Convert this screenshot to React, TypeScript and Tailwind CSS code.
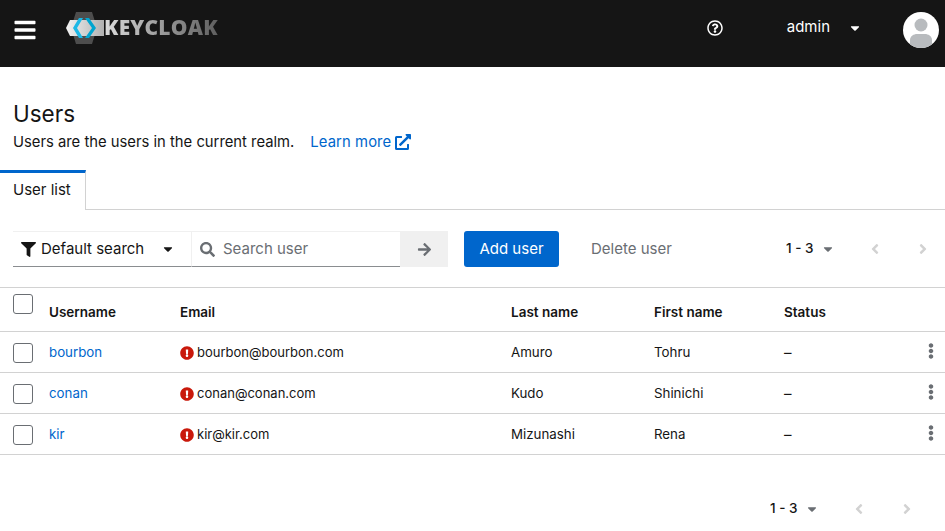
import {
  FaAngleLeft,
  FaAngleRight,
  FaArrowRight,
  FaBars,
  FaCaretDown,
  FaEllipsisV,
  FaExclamationCircle,
  FaExternalLinkAlt,
  FaFilter,
  FaRegQuestionCircle,
  FaSearch,
} from "react-icons/fa";

const users = [
  { username: "bourbon", email: "bourbon@bourbon.com", last: "Amuro", first: "Tohru" },
  { username: "conan", email: "conan@conan.com", last: "Kudo", first: "Shinichi" },
  { username: "kir", email: "kir@kir.com", last: "Mizunashi", first: "Rena" },
];

const columns = "grid grid-cols-[36px_131px_331px_143px_130px_1fr] items-center px-[13px]";

function Logo() {
  return (
    <div className="mb-[4px] flex items-center">
      <svg width="38" height="32" viewBox="0 0 38 32" className="shrink-0">
        <defs>
          <linearGradient id="bar" x1="0" x2="1" y1="0" y2="0">
            <stop offset="0" stopColor="#f2f2f2" />
            <stop offset="1" stopColor="#b0b0b0" />
          </linearGradient>
        </defs>
        <polygon points="5,16 10,0 26,0 31,16 26,32 10,32" fill="#4d4d4d" />
        <polygon points="0,16 4,8 38,8 38,24 4,24" fill="url(#bar)" />
        <polygon points="13,6 17,6 11,16 17,26 13,26 7,16" fill="#1cb8e6" />
        <polygon points="19,6 23,6 30,16 23,26 19,26 26,16" fill="#00a5d0" />
      </svg>
      <span className="bg-gradient-to-r from-[#dcdcdc] to-[#5f5f5f] bg-clip-text text-[21px] font-extrabold tracking-[0.2px] text-transparent [font-family:'Open_Sans',sans-serif]">
        KEYCLOAK
      </span>
    </div>
  );
}

function Avatar() {
  return (
    <svg width="36" height="36" viewBox="0 0 36 36">
      <defs>
        <clipPath id="av">
          <circle cx="18" cy="18" r="18" />
        </clipPath>
      </defs>
      <circle cx="18" cy="18" r="18" fill="#fff" />
      <g clipPath="url(#av)" fill="#b8bbbe">
        <circle cx="18" cy="13" r="6.5" />
        <path d="M7 36 V28 C7 24 11 22 14 22 H22 C25 22 29 24 29 28 V36 Z" />
      </g>
    </svg>
  );
}

function Pager({ className }: { className: string }) {
  return (
    <div className={`flex items-center text-[#151515] ${className}`}>
      <span className="mb-[1px] w-[35px] text-[13.5px] font-medium whitespace-nowrap">1 - 3</span>
      <FaCaretDown className="shrink-0 text-[14px] text-[#6a6e73]" />
      <FaAngleLeft className="ml-[32px] shrink-0 text-[16px] text-[#d2d2d2]" />
      <FaAngleRight className="ml-[32px] shrink-0 text-[16px] text-[#d2d2d2]" />
    </div>
  );
}

export default function App() {
  return (
    <div className="flex h-screen flex-col overflow-hidden bg-white text-[#151515] [font-family:Inter,sans-serif]">
      {/* Masthead */}
      <header className="flex h-[67px] shrink-0 items-center bg-[#151515] pr-[6px] pb-[8px] pl-[13px] text-white">
        <FaBars className="shrink-0 text-[24px]" />
        <div className="ml-[29px]">
          <Logo />
        </div>
        <div className="ml-auto flex items-center">
          <div className="mb-[4px] flex items-center">
            <FaRegQuestionCircle className="shrink-0 text-[16px]" />
            <span className="ml-[64px] text-[15px]">admin</span>
            <FaCaretDown className="ml-[18px] shrink-0 text-[14px]" />
          </div>
          <div className="ml-[41px]">
            <Avatar />
          </div>
        </div>
      </header>

      {/* Title */}
      <section className="px-[13px] pt-[32px]">
        <h1 className="text-[22.5px] leading-[29px]">Users</h1>
        <p className="mt-[2px] flex items-center text-[14.8px] leading-[24px]">
          Users are the users in the current realm.
          <a className="ml-[16px] flex items-center gap-[4px] text-[#06c]">
            <span className="tracking-[0.1px]">Learn more</span>
            <FaExternalLinkAlt className="text-[16px]" />
          </a>
        </p>
      </section>

      {/* Tabs */}
      <div className="mt-[16px] flex h-[40px] border-b border-[#d2d2d2]">
        <div className="-mb-px flex w-[86px] items-center border-t-[3px] border-r border-t-[#06c] border-r-[#d2d2d2] bg-white pb-[2px] pl-[13px] text-[15px]">
          User list
        </div>
      </div>

      {/* Toolbar */}
      <div className="mt-[21px] flex h-[36px] items-center pr-[14px] pl-[13px] whitespace-nowrap">
        <div className="flex h-full border-t border-[#f0f0f0]">
          <div className="flex w-[179px] items-center border-r border-b border-r-[#f0f0f0] border-b-[#8a8d90] pl-[8px] text-[15px]">
            <FaFilter className="shrink-0 text-[15px]" />
            <span className="ml-[5px]">Default search</span>
            <FaCaretDown className="ml-[17px] shrink-0 text-[14px]" />
          </div>
          <div className="flex w-[208px] items-center border-b border-[#8a8d90] pl-[8px] text-[15px] text-[#6a6e73]">
            <FaSearch className="shrink-0 text-[15px]" />
            <span className="ml-[8px]">Search user</span>
          </div>
          <div className="flex w-[48px] shrink-0 items-center justify-center bg-[#f0f0f0] text-[#6a6e73]">
            <FaArrowRight className="text-[15px]" />
          </div>
        </div>
        <button className="ml-[16px] h-full w-[95px] rounded-[3px] bg-[#06c] text-[15px] text-white">Add user</button>
        <span className="ml-[32px] text-[15px] text-[#6a6e73]">Delete user</span>
        <Pager className="ml-auto" />
      </div>

      {/* Table */}
      <div className="mt-[20px] border-t border-[#d2d2d2]">
        <div className={`${columns} h-[44px] border-b border-[#d2d2d2] pt-[6px] text-[13.5px] font-semibold`}>
          <input type="checkbox" className="mb-[17px] h-[20px] w-[20px] appearance-none rounded-[3px] border border-[#6a6e73] bg-white" />
          <span>Username</span>
          <span>Email</span>
          <span>Last name</span>
          <span>First name</span>
          <span>Status</span>
        </div>
        {users.map((u) => (
          <div key={u.username} className={`${columns} h-[41px] border-b border-[#d2d2d2] pt-[2px] text-[13.3px]`}>
            <input type="checkbox" className="h-[20px] w-[20px] appearance-none rounded-[3px] border border-[#6a6e73] bg-white" />
            <a className="text-[#06c]">{u.username}</a>
            <span className="flex items-center gap-[3px] text-[13px]">
              <FaExclamationCircle className="mb-[1px] shrink-0 text-[14px] text-[#c9190b]" />
              {u.email}
            </span>
            <span>{u.last}</span>
            <span>{u.first}</span>
            <div className="flex items-center justify-between">
              <span className="text-[15px]">–</span>
              <FaEllipsisV className="mr-[-7px] mb-[4px] shrink-0 text-[16px] text-[#6a6e73]" />
            </div>
          </div>
        ))}
      </div>

      {/* Bottom pagination */}
      <Pager className="mt-[43px] justify-end pr-[30px]" />
    </div>
  );
}
